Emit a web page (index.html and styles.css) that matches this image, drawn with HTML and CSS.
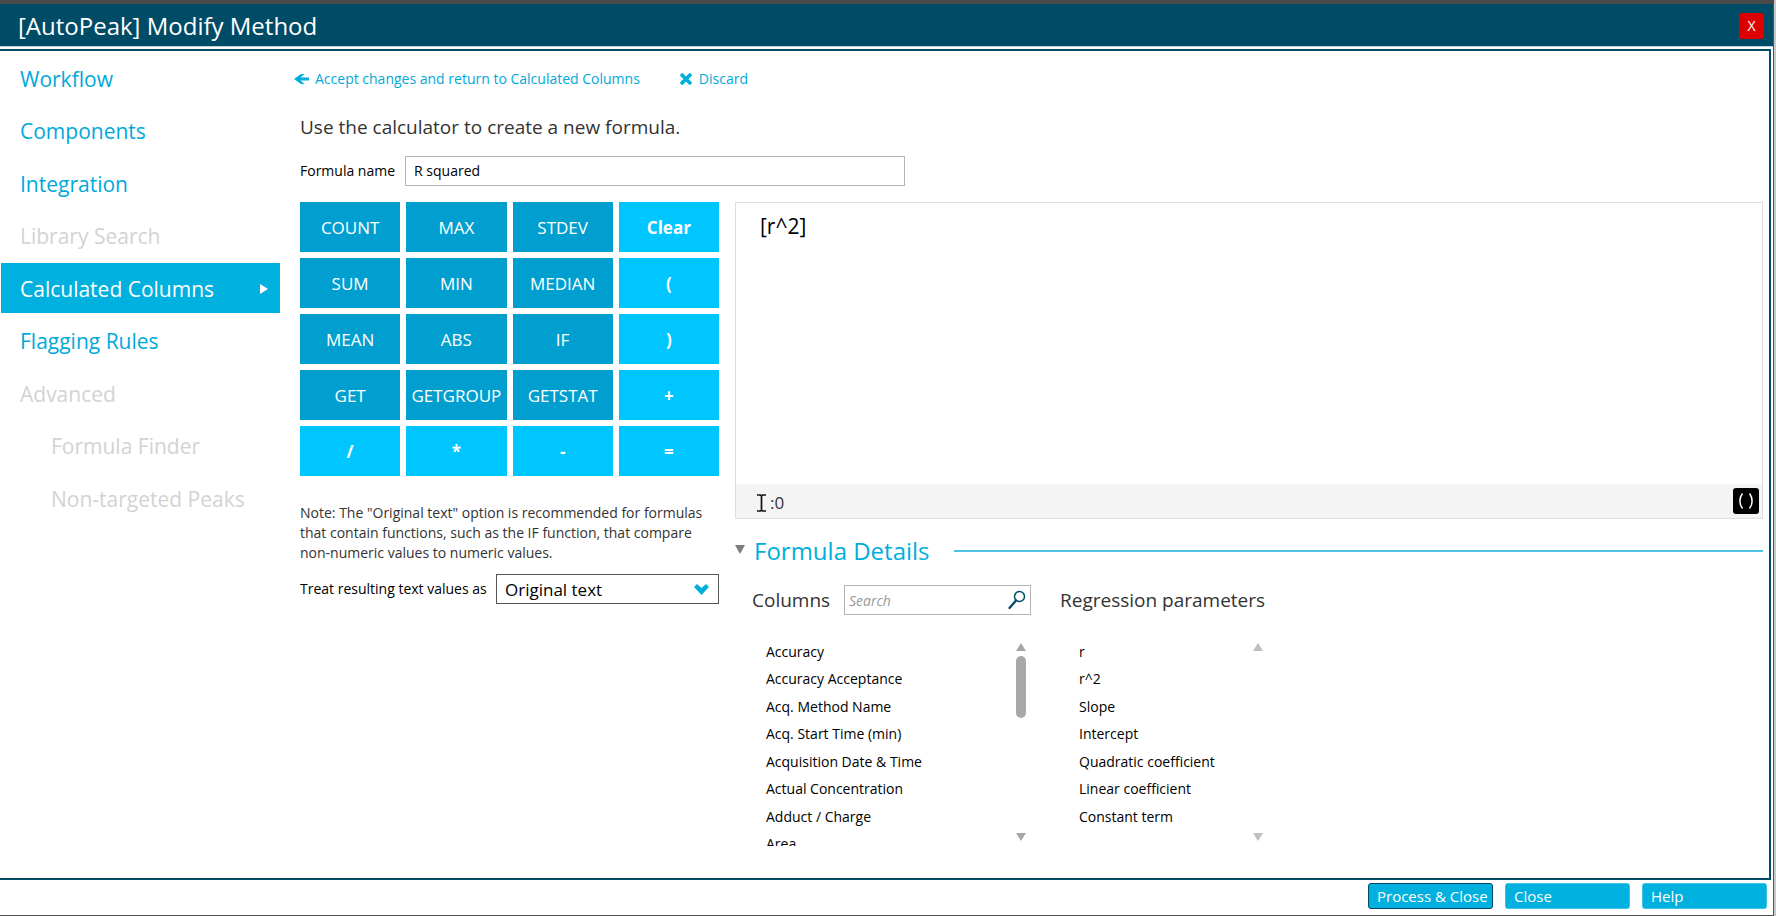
FILE: index.html
```html
<!DOCTYPE html>
<html lang="en">
<head>
<meta charset="utf-8">
<title>[AutoPeak] Modify Method</title>
<link rel="stylesheet" href="styles.css">
</head>
<body>
<div class="window">
  <header class="titlebar">
    <h1 class="title">[AutoPeak] Modify Method</h1>
    <button class="close-x" type="button" aria-label="Close window">X</button>
  </header>
  <main class="panel">
    <nav class="sidebar">
      <ul class="nav">
        <li class="nav-row"><a class="nav-item" href="#">Workflow</a></li>
        <li class="nav-row"><a class="nav-item" href="#">Components</a></li>
        <li class="nav-row"><a class="nav-item" href="#">Integration</a></li>
        <li class="nav-row"><a class="nav-item off">Library Search</a></li>
        <li class="nav-row"><a class="nav-item active" href="#">Calculated Columns
          <svg width="8" height="10" viewBox="0 0 8 10"><path d="M0 0L8 5L0 10Z" fill="#fff"/></svg></a></li>
        <li class="nav-row"><a class="nav-item" href="#">Flagging Rules</a></li>
        <li class="nav-row"><a class="nav-item off">Advanced</a></li>
        <li class="nav-row"><a class="nav-item off sub">Formula Finder</a></li>
        <li class="nav-row"><a class="nav-item off sub">Non-targeted Peaks</a></li>
      </ul>
    </nav>
    <section class="content">
      <div class="actions">
        <a class="action" href="#"><svg width="15" height="10" viewBox="0 0 15 10"><path d="M0 5L7 0H10.500L6.500 3.600H15V6.400H6.500L10.500 10H7Z" fill="#00aedb"/></svg>Accept changes and return to Calculated Columns</a>
        <a class="action" href="#"><svg width="14" height="12" viewBox="0 0 14 12"><path d="M2 1L12 11M12 1L2 11" stroke="#00aedb" stroke-width="3.600"/></svg>Discard</a>
      </div>
      <p class="lead">Use the calculator to create a new formula.</p>
      <div class="name-row">
        <label for="fname">Formula name</label>
        <input class="name-input" id="fname" type="text" value="R squared">
      </div>
      <div class="work">
        <div class="left">
          <div class="keys">
            <button class="key" type="button">COUNT</button><button class="key" type="button">MAX</button><button class="key" type="button">STDEV</button><button class="key op" type="button">Clear</button>
            <button class="key" type="button">SUM</button><button class="key" type="button">MIN</button><button class="key" type="button">MEDIAN</button><button class="key op" type="button">(</button>
            <button class="key" type="button">MEAN</button><button class="key" type="button">ABS</button><button class="key" type="button">IF</button><button class="key op" type="button">)</button>
            <button class="key" type="button">GET</button><button class="key" type="button">GETGROUP</button><button class="key" type="button">GETSTAT</button><button class="key op" type="button">+</button>
            <button class="key op" type="button">/</button><button class="key op" type="button">*</button><button class="key op" type="button">-</button><button class="key op" type="button">=</button>
          </div>
          <p class="note">Note: The "Original text" option is recommended for formulas that contain functions, such as the IF function, that compare non-numeric values to numeric values.</p>
          <div class="treat">
            <label for="treat">Treat resulting text values as</label>
            <div class="select-wrap">
              <select class="select" id="treat"><option>Original text</option></select>
              <svg class="chevron" width="15" height="11" viewBox="0 0 15 11"><path d="M0 3L3 0L7.500 4L12 0L15 3L7.500 11Z" fill="#00aedb"/></svg>
            </div>
          </div>
        </div>
        <div class="right">
          <div class="editor">
            <textarea class="formula" aria-label="Formula" spellcheck="false">[r^2]</textarea>
            <div class="status">
              <span class="pos"><svg width="9" height="18" viewBox="0 0 9 18"><path d="M0 1H3.500L4.500 2L5.500 1H9M0 17H3.500L4.500 16L5.500 17H9M4.500 2V16" fill="none" stroke="#111" stroke-width="1.700"/></svg>:0</span>
              <button class="paren" type="button" aria-label="Parentheses"><svg width="26" height="26" viewBox="0 0 26 26"><path d="M9.500 5.500C6 10 6 16 9.500 20.500M16.500 5.500C20 10 20 16 16.500 20.500" fill="none" stroke="#fff" stroke-width="1.500"/></svg></button>
            </div>
          </div>
          <div class="details-head">
            <svg width="10" height="12" viewBox="0 0 10 12"><path d="M0 0H10L5 9Z" fill="#7d7d82"/></svg>
            <h2 class="details-title">Formula Details</h2>
            <span class="rule"></span>
          </div>
          <div class="lists">
            <div class="list-col">
              <div class="list-head">
                <label class="list-title" for="search">Columns</label>
                <div class="search"><input class="search-input" id="search" type="text" placeholder="Search"><svg width="18" height="20" viewBox="0 0 18 20"><circle cx="11.500" cy="6.500" r="5" fill="none" stroke="#004b66" stroke-width="1.500"/><path d="M8 10.500L1.500 18" stroke="#004b66" stroke-width="2.300" stroke-linecap="round"/></svg></div>
              </div>
              <div class="list-box">
                <ul class="list">
                  <li class="item">Accuracy</li><li class="item">Accuracy Acceptance</li><li class="item">Acq. Method Name</li><li class="item">Acq. Start Time (min)</li><li class="item">Acquisition Date &amp; Time</li><li class="item">Actual Concentration</li><li class="item">Adduct / Charge</li><li class="item">Area</li>
                </ul>
                <div class="scroll"><svg width="10" height="8" viewBox="0 0 10 8"><path d="M0 8L5 0L10 8Z" fill="#a6a6a6"/></svg><span class="thumb"></span><svg width="10" height="8" viewBox="0 0 10 8"><path d="M0 0L5 8L10 0Z" fill="#a6a6a6"/></svg></div>
              </div>
            </div>
            <div class="list-col narrow">
              <div class="list-head"><h3 class="list-title">Regression parameters</h3></div>
              <div class="list-box">
                <ul class="list">
                  <li class="item">r</li><li class="item">r^2</li><li class="item">Slope</li><li class="item">Intercept</li><li class="item">Quadratic coefficient</li><li class="item">Linear coefficient</li><li class="item">Constant term</li>
                </ul>
                <div class="scroll"><svg width="10" height="8" viewBox="0 0 10 8"><path d="M0 8L5 0L10 8Z" fill="#bfbfbf"/></svg><svg width="10" height="8" viewBox="0 0 10 8"><path d="M0 0L5 8L10 0Z" fill="#bfbfbf"/></svg></div>
              </div>
            </div>
          </div>
        </div>
      </div>
    </section>
  </main>
  <footer class="footer">
    <button class="foot primary" type="button">Process &amp; Close</button>
    <button class="foot" type="button">Close</button>
    <button class="foot" type="button">Help</button>
  </footer>
</div>
</body>
</html>
```
FILE: styles.css
```css
* { box-sizing: border-box; }
body {
  margin: 0;
  padding-right: 2px;
  background: #c8c8c8;
  font-family: "Open Sans", "Noto Sans", sans-serif;
  font-size: 14px;
  line-height: 20px;
  color: #000;
}
button, input, select, textarea { font-family: inherit; color: inherit; margin: 0; }
h1, h2, h3, p, ul { margin: 0; padding: 0; font-weight: 400; }
ul { list-style: none; }
a { color: #00a9da; text-decoration: none; }
svg { flex: none; display: block; }

.window {
  display: flex;
  flex-direction: column;
  min-height: 100vh;
  background: #fff;
  border-top: 4px solid #4a4a4a;
  border-right: 1px solid #555;
  border-bottom: 1px solid #555;
}
.titlebar {
  display: flex;
  align-items: center;
  justify-content: space-between;
  height: 43px;
  padding: 1px 9px 0 18px;
  background: #004b66;
  border-bottom: 1px solid #b9cfda;
  color: #fff;
}
.title { font-size: 24px; line-height: 36px; }
.close-x {
  width: 25px;
  height: 26px;
  padding: 0;
  border: 0;
  border-radius: 3px;
  background: #dc0000;
  color: #fff;
  font-size: 14px;
}

.panel {
  display: flex;
  flex: 1;
  margin: 2px 2px 0 0;
  border: 2px solid #004b66;
  border-left: 0;
}
.sidebar { flex: none; width: 280px; padding: 2px 0 0 1px; }
.nav { display: flex; flex-direction: column; gap: 2px; }
.nav-row:nth-child(even) { margin-bottom: 1px; }
.nav-item {
  display: flex;
  align-items: center;
  justify-content: space-between;
  height: 50px;
  padding: 2px 12px 0 19px;
  font-size: 21px;
}
.nav-item.off { color: #d3d3d3; }
.nav-item.sub { padding-left: 50px; }
.nav-item.active { background: #00b0de; color: #fff; }

.content { flex: 1; min-width: 0; padding: 18px 6px 30px 20px; }
.actions { display: flex; gap: 39px; margin-left: -6px; }
.action { display: flex; align-items: center; gap: 6px; }
.lead { margin-top: 24px; font-size: 19px; line-height: 28px; color: #333; }
.name-row { display: flex; align-items: center; gap: 10px; margin-top: 15px; }
.name-input {
  width: 500px;
  height: 30px;
  padding: 0 8px 1px;
  border: 1px solid #b4b4b4;
  font-size: 14px;
}
.work { display: flex; gap: 16px; margin-top: 16px; }
.left { flex: none; width: 419px; }
.keys { display: grid; grid-template-columns: repeat(4, 1fr); gap: 6px; }
.key {
  height: 50px;
  padding: 0;
  border: 0;
  background: #009fcf;
  color: #fff;
  font-size: 17px;
}
.key.op { background: #00c6ff; font-weight: 700; }
.note { margin-top: 27px; color: #333; }
.treat { display: flex; align-items: center; justify-content: space-between; margin-top: 11px; }
.select-wrap { position: relative; width: 223px; }
.select {
  display: block;
  width: 100%;
  height: 30px;
  padding: 1px 8px 0;
  border: 1px solid #555;
  border-radius: 0;
  background: #fff;
  appearance: none;
  font-size: 17px;
}
.chevron { position: absolute; right: 10px; top: 10px; pointer-events: none; }

.right { flex: 1; min-width: 0; }
.editor { border: 1px solid #dedede; }
.formula {
  display: block;
  width: 100%;
  height: 281px;
  padding: 9px 24px;
  border: 0;
  resize: none;
  outline: 0;
  font-size: 21px;
  line-height: 28px;
}
.status {
  display: flex;
  align-items: center;
  justify-content: space-between;
  height: 34px;
  padding: 0 3px 0 21px;
  background: #f4f4f4;
  color: #333;
  font-size: 17px;
}
.pos { display: flex; align-items: center; gap: 4px; padding-top: 3px; }
.paren { padding: 0; border: 0; border-radius: 3px; background: #000; }
.details-head { display: flex; align-items: center; margin-top: 14px; }
.details-title { margin: 0 24px 0 9px; font-size: 24px; line-height: 36px; color: #00aedb; }
.rule { flex: 1; height: 2px; background: #4cc3e4; }
.lists { display: flex; gap: 29px; margin: 16px 0 0 17px; }
.list-col { width: 279px; }
.list-col.narrow { width: 203px; }
.list-head { display: flex; align-items: center; justify-content: space-between; height: 30px; }
.list-title { font-size: 19px; line-height: 28px; color: #333; white-space: nowrap; }
.search {
  display: flex;
  align-items: center;
  width: 187px;
  height: 30px;
  padding: 0 4px;
  border: 1px solid #b4b4b4;
}
.search-input { flex: 1; min-width: 0; padding: 0; border: 0; outline: 0; font-size: 14px; font-style: italic; }
.search-input::placeholder { color: #999; }
.list-box { display: flex; justify-content: space-between; height: 205px; margin-top: 26px; overflow: hidden; }
.list { padding-left: 14px; }
.narrow .list { padding-left: 19px; }
.item { line-height: 27px; margin-top: -3px; margin-bottom: 3px; }
.item:nth-child(even) { margin-bottom: 4px; }
.scroll { display: flex; flex-direction: column; align-items: center; justify-content: space-between; padding: 2px 5px 5px; }
.narrow .scroll { padding-right: 0; }
.thumb { width: 10px; height: 62px; margin: 5px 0 auto; border-radius: 5px; background: #a9a9a9; }

.footer { display: flex; justify-content: flex-end; gap: 12px; height: 35px; padding: 3px 6px 6px; }
.foot {
  width: 125px;
  height: 26px;
  padding: 0 0 1px 8px;
  border: 1px solid #3cc4e8;
  border-radius: 3px;
  background: #00b0de;
  color: #fff;
  font-size: 15px;
  line-height: 20px;
  text-align: left;
  white-space: nowrap;
}
.foot.primary { border-color: #004b66; }
```
